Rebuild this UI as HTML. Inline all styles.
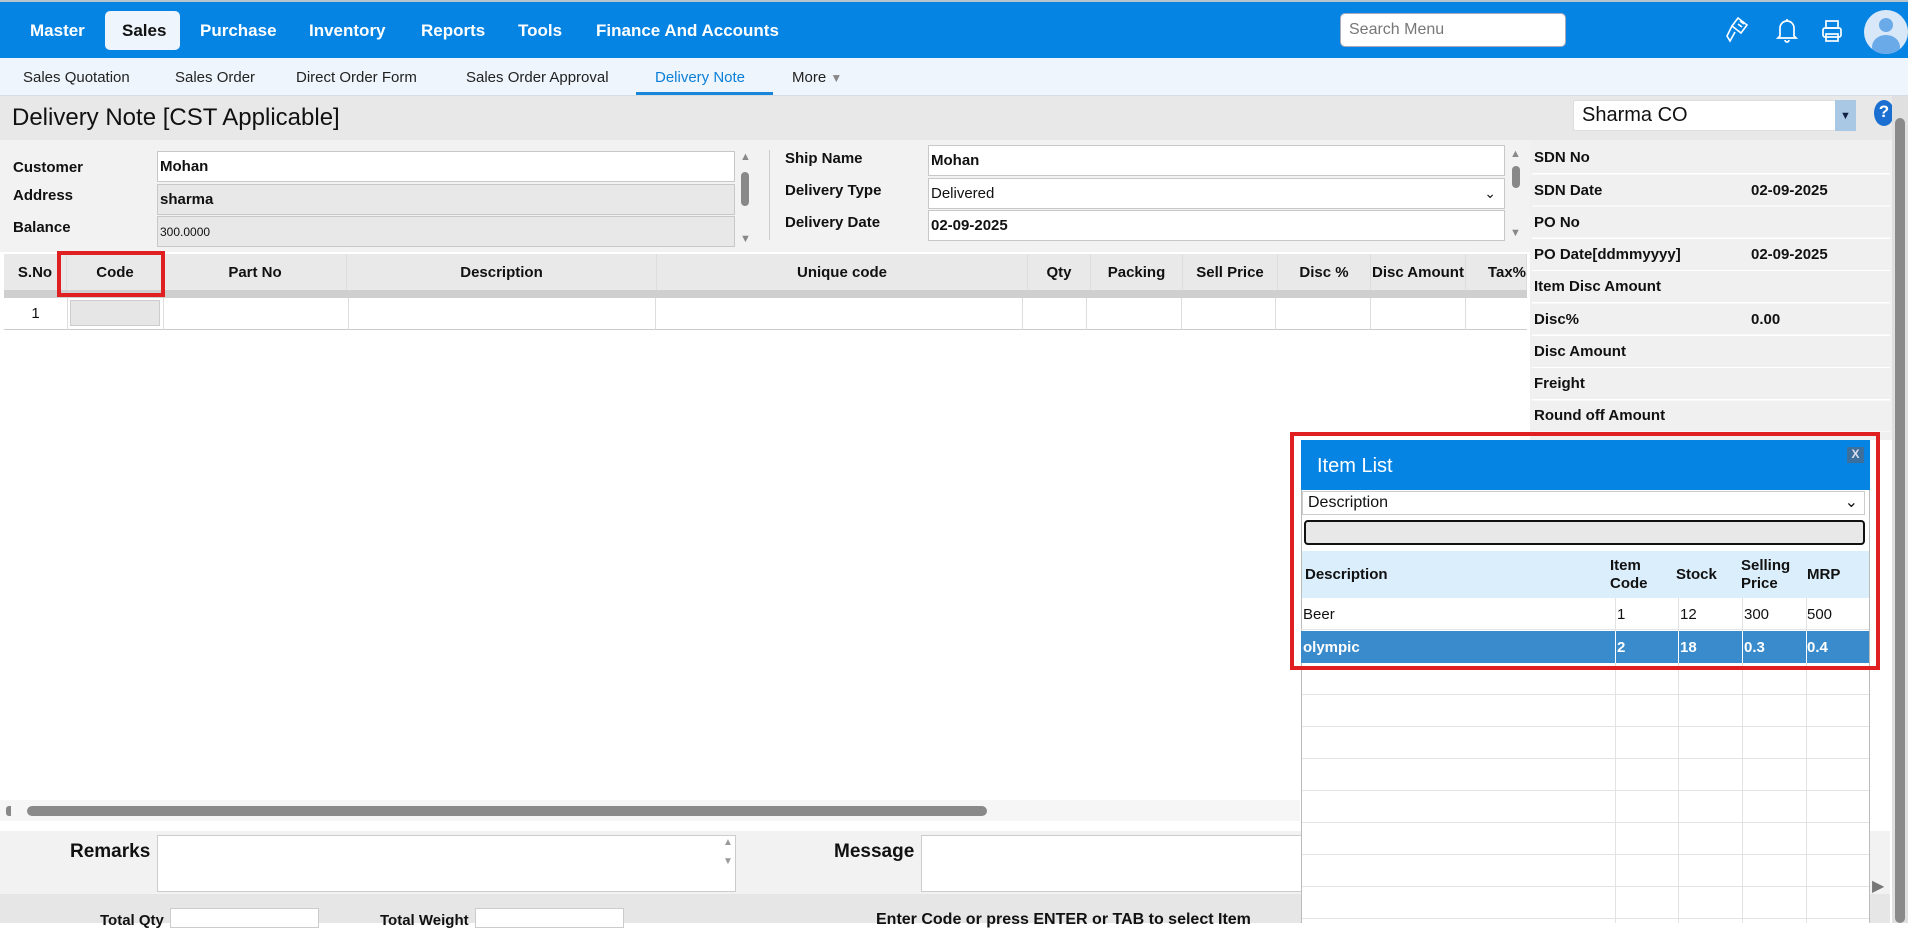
<!DOCTYPE html>
<html><head><meta charset="utf-8"><style>
*{box-sizing:border-box;margin:0;padding:0}
body{width:1908px;height:923px;overflow:hidden;position:relative;font-family:"Liberation Sans",sans-serif;background:#fff;color:#111}
.a{position:absolute}
.nav{left:0;top:0;width:1908px;height:58px;background:#0684e4;border-top:2px solid #b8c4cc}
.ni{position:absolute;top:19px;color:#fff;font-weight:bold;font-size:17px}
.sub{left:0;top:58px;width:1908px;height:38px;background:#eef5fc;border-bottom:1px solid #d6dde4}
.si{position:absolute;top:11px;font-size:15px;color:#222}
.lbl{position:absolute;font-size:15px;font-weight:bold;color:#111}
.inp{position:absolute;border:1px solid #c8c8c8;background:#fff;font-size:15px;padding-left:2px;display:flex;align-items:center}
.th{position:absolute;top:254px;height:37px;border-right:1px solid #ddd;font-size:15px;font-weight:bold;display:flex;align-items:center;justify-content:center;background:#e9e9e9}
.td{position:absolute;top:298px;height:32px;border-right:1px solid #ddd;border-bottom:1px solid #ccc;background:#fff}
.rp{position:absolute;left:1532px;width:358px;height:31px;font-size:15px;font-weight:bold}
.rp span{position:absolute;left:2px;top:7px}
.rp b{position:absolute;left:219px;top:7px}
.rp i{position:absolute;left:217px;top:0;width:141px;height:31px;background:#f0f0f0}
.mrow{position:absolute;left:1301px;width:568px;height:32px;border-bottom:1px solid #e4e4e4;font-size:15px}
.vl{position:absolute;top:598px;height:325px;width:1px;background:#e2e2e2}
</style></head><body>
<div class="a nav">
<div class="ni" style="left:30px">Master</div>
<div class="a" style="left:105px;top:9px;width:75px;height:39px;background:#eef5fc;border-radius:5px"></div>
<div class="ni" style="left:122px;color:#111">Sales</div>
<div class="ni" style="left:200px">Purchase</div>
<div class="ni" style="left:309px">Inventory</div>
<div class="ni" style="left:421px">Reports</div>
<div class="ni" style="left:518px">Tools</div>
<div class="ni" style="left:596px">Finance And Accounts</div>
<div class="a" style="left:1340px;top:11px;width:226px;height:34px;background:#fff;border-radius:5px;border:1px solid #aab;font-size:16px;color:#777;padding:7px 8px">Search Menu</div>
<svg class="a" style="left:1724px;top:14px" width="26" height="28" viewBox="0 0 26 28" fill="none" stroke="#fff" stroke-width="1.6"><path d="M14 2l9 7-6 8-9-7z"/><path d="M8 10l-5 10 3 5 5-9"/><path d="M16 5l4 3M14 8l4 3"/></svg>
<svg class="a" style="left:1776px;top:15px" width="22" height="26" viewBox="0 0 22 26" fill="none" stroke="#fff" stroke-width="1.7"><path d="M4 19V11a7 7 0 0114 0v8l2 2H2z"/><path d="M9 23a2 2 0 004 0M11 2v2"/></svg>
<svg class="a" style="left:1821px;top:17px" width="22" height="24" viewBox="0 0 22 24" fill="none" stroke="#fff" stroke-width="1.7"><rect x="5" y="2" width="12" height="7"/><rect x="2" y="9" width="18" height="9" rx="2"/><rect x="5" y="15" width="12" height="7"/></svg>
<div class="a" style="left:1864px;top:8px;width:44px;height:44px;border-radius:50%;background:#d8e8f8;overflow:hidden"><div class="a" style="left:15px;top:8px;width:14px;height:14px;border-radius:50%;background:#6aaae8"></div><div class="a" style="left:8px;top:25px;width:28px;height:24px;border-radius:50%;background:#6aaae8"></div></div>
</div>
<div class="a sub">
<div class="si" style="left:23px">Sales Quotation</div>
<div class="si" style="left:175px">Sales Order</div>
<div class="si" style="left:296px">Direct Order Form</div>
<div class="si" style="left:466px">Sales Order Approval</div>
<div class="si" style="left:655px;color:#0b7fd8">Delivery Note</div>
<div class="a" style="left:636px;top:34px;width:137px;height:3px;background:#1a86d8"></div>
<div class="si" style="left:792px">More <span style="color:#888;font-size:12px">▼</span></div>
</div>
<div class="a" style="left:0;top:96px;width:1908px;height:44px;background:#e8e8e8"></div>
<div class="a" style="left:12px;top:104px;font-size:24px">Delivery Note [CST Applicable]</div>
<div class="a" style="left:1573px;top:100px;width:283px;height:31px;background:#fff;border:1px solid #ddd;font-size:20px;padding:3px 8px">Sharma CO</div>
<div class="a" style="left:1835px;top:100px;width:21px;height:31px;background:#a8c8e4;color:#124;font-size:11px;text-align:center;padding-top:10px">▼</div>
<div class="a" style="left:1874px;top:100px;width:20px;height:26px;border-radius:50%;background:#1a6fd0;color:#fff;font-weight:bold;font-size:17px;text-align:center;padding-top:2px">?</div>
<div class="a" style="left:1892px;top:96px;width:16px;height:827px;background:#e0e0e0"><div class="a" style="left:3px;top:22px;width:10px;height:805px;background:#8a8a8a;border-radius:5px"></div></div>

<div class="a" style="left:0;top:140px;width:1530px;height:112px;background:#f2f2f2"></div>
<div class="lbl" style="left:13px;top:159px">Customer</div>
<div class="lbl" style="left:13px;top:187px">Address</div>
<div class="lbl" style="left:13px;top:219px">Balance</div>
<div class="inp" style="left:157px;top:151px;width:578px;height:31px;font-weight:bold">Mohan</div>
<div class="inp" style="left:157px;top:184px;width:578px;height:31px;background:#e8e8e8;font-weight:bold">sharma</div>
<div class="inp" style="left:157px;top:216px;width:578px;height:31px;background:#e8e8e8;font-size:12px">300.0000</div>
<div class="a" style="left:740px;top:151px;font-size:11px;color:#888">▲</div>
<div class="a" style="left:741px;top:172px;width:8px;height:34px;border-radius:4px;background:#888"></div>
<div class="a" style="left:740px;top:233px;font-size:11px;color:#888">▼</div>
<div class="a" style="left:769px;top:150px;width:1px;height:90px;background:#ccc"></div>
<div class="lbl" style="left:785px;top:150px">Ship Name</div>
<div class="lbl" style="left:785px;top:182px">Delivery Type</div>
<div class="lbl" style="left:785px;top:214px">Delivery Date</div>
<div class="inp" style="left:928px;top:145px;width:577px;height:31px;font-weight:bold">Mohan</div>
<div class="inp" style="left:928px;top:178px;width:577px;height:31px">Delivered<span style="position:absolute;right:8px;font-size:14px">⌄</span></div>
<div class="inp" style="left:928px;top:210px;width:577px;height:31px;font-weight:bold">02-09-2025</div>
<div class="a" style="left:1510px;top:148px;font-size:11px;color:#888">▲</div>
<div class="a" style="left:1512px;top:166px;width:8px;height:22px;border-radius:4px;background:#888"></div>
<div class="a" style="left:1510px;top:227px;font-size:11px;color:#888">▼</div>

<div class="a" style="left:1530px;top:140px;width:362px;height:300px;background:#f0f0f0"></div>
<div class="rp" style="top:142px"><i></i><span>SDN No</span></div>
<div class="rp" style="top:175px"><i></i><span>SDN Date</span><b>02-09-2025</b></div>
<div class="rp" style="top:207px"><i></i><span>PO No</span></div>
<div class="rp" style="top:239px"><i></i><span>PO Date[ddmmyyyy]</span><b>02-09-2025</b></div>
<div class="rp" style="top:271px"><i></i><span>Item Disc Amount</span></div>
<div class="rp" style="top:304px"><i></i><span>Disc%</span><b>0.00</b></div>
<div class="rp" style="top:336px"><i></i><span>Disc Amount</span></div>
<div class="rp" style="top:368px"><i></i><span>Freight</span></div>
<div class="rp" style="top:400px"><i></i><span>Round off Amount</span></div>
<div class="a" style="left:1532px;top:142px;width:358px;height:290px;background:repeating-linear-gradient(to bottom,transparent 0 31px,#fff 31px 32.3px)"></div>

<div class="th" style="left:4px;width:63px">S.No</div>
<div class="th" style="left:67px;width:97px">Code</div>
<div class="th" style="left:164px;width:183px">Part No</div>
<div class="th" style="left:347px;width:310px">Description</div>
<div class="th" style="left:657px;width:371px">Unique code</div>
<div class="th" style="left:1028px;width:63px">Qty</div>
<div class="th" style="left:1091px;width:92px">Packing</div>
<div class="th" style="left:1183px;width:95px">Sell Price</div>
<div class="th" style="left:1278px;width:93px">Disc %</div>
<div class="th" style="left:1371px;width:95px">Disc Amount</div>
<div class="th" style="left:1466px;width:61px;justify-content:flex-end;overflow:hidden">Tax%</div>
<div class="a" style="left:4px;top:290px;width:1523px;height:8px;background:#cfcfcf"></div>
<div class="td" style="left:4px;width:64px;font-size:15px;text-align:center;padding-top:7px">1</div>
<div class="td" style="left:68px;width:96px"><div class="a" style="left:2px;top:2px;width:90px;height:26px;background:#e6e6e6;border:1px solid #ccc"></div></div>
<div class="td" style="left:164px;width:185px"></div>
<div class="td" style="left:349px;width:307px"></div>
<div class="td" style="left:656px;width:367px"></div>
<div class="td" style="left:1023px;width:64px"></div>
<div class="td" style="left:1087px;width:95px"></div>
<div class="td" style="left:1182px;width:94px"></div>
<div class="td" style="left:1276px;width:95px"></div>
<div class="td" style="left:1371px;width:95px"></div>
<div class="td" style="left:1466px;width:61px;border-right:none"></div>
<div class="a" style="left:57px;top:251px;width:108px;height:46px;border:4px solid #e02020"></div>

<div class="a" style="left:0;top:800px;width:1300px;height:21px;background:#f6f6f6"></div>
<div class="a" style="left:6px;top:806px;width:5px;height:10px;background:#888;border-radius:3px 0 0 3px"></div>
<div class="a" style="left:27px;top:806px;width:960px;height:10px;background:#8a8a8a;border-radius:5px"></div>

<div class="a" style="left:0;top:831px;width:1890px;height:63px;background:#f2f2f2"></div>
<div class="a" style="left:70px;top:841px;font-size:19px;font-weight:bold;width:78px;text-align:right">Remarks</div>
<div class="a" style="left:157px;top:835px;width:579px;height:57px;background:#fff;border:1px solid #ccc"></div>
<div class="a" style="left:723px;top:837px;font-size:10px;color:#999">▲</div>
<div class="a" style="left:723px;top:856px;font-size:10px;color:#999">▼</div>
<div class="a" style="left:834px;top:841px;font-size:19px;font-weight:bold">Message</div>
<div class="a" style="left:921px;top:835px;width:400px;height:57px;background:#fff;border:1px solid #ccc"></div>
<div class="a" style="left:0;top:894px;width:1890px;height:29px;background:#e6e6e6"></div>
<div class="a" style="left:100px;top:912px;font-size:15px;font-weight:bold">Total Qty</div>
<div class="a" style="left:170px;top:908px;width:149px;height:20px;background:#fff;border:1px solid #ccc"></div>
<div class="a" style="left:380px;top:912px;font-size:15px;font-weight:bold">Total Weight</div>
<div class="a" style="left:475px;top:908px;width:149px;height:20px;background:#fff;border:1px solid #ccc"></div>
<div class="a" style="left:876px;top:911px;font-size:16px;font-weight:bold">Enter Code or press ENTER or TAB to select Item</div>
<div class="a" style="left:1872px;top:876px;font-size:16px;color:#777">▶</div>

<div class="a" style="left:1301px;top:440px;width:569px;height:483px;background:#fff;border-left:1px solid #bbb;border-right:1px solid #bbb"></div>
<div class="a" style="left:1301px;top:440px;width:569px;height:50px;background:#0684e4"></div>
<div class="a" style="left:1317px;top:455px;color:#fff;font-size:20px">Item List</div>
<div class="a" style="left:1847px;top:447px;width:17px;height:16px;background:#3d6f9c;color:#dde;font-size:12px;font-weight:bold;text-align:center">X</div>
<div class="a" style="left:1302px;top:491px;width:563px;height:24px;background:#fff;border:1px solid #ccc;font-size:16px;padding:2px 5px">Description<span style="position:absolute;right:6px;top:0">⌄</span></div>
<div class="a" style="left:1304px;top:520px;width:561px;height:25px;background:#e8e8e8;border:2px solid #111;border-radius:4px"></div>
<div class="a" style="left:1302px;top:551px;width:567px;height:47px;background:#daeefc"></div>
<div class="a" style="left:1305px;top:566px;font-size:15px;font-weight:bold">Description</div>
<div class="a" style="left:1610px;top:557px;font-size:15px;font-weight:bold;line-height:18px">Item<br>Code</div>
<div class="a" style="left:1676px;top:566px;font-size:15px;font-weight:bold">Stock</div>
<div class="a" style="left:1741px;top:557px;font-size:15px;font-weight:bold;line-height:18px">Selling<br>Price</div>
<div class="a" style="left:1807px;top:566px;font-size:15px;font-weight:bold">MRP</div>
<div class="vl" style="left:1615px"></div><div class="vl" style="left:1678px"></div><div class="vl" style="left:1742px"></div><div class="vl" style="left:1806px"></div>
<div class="mrow" style="top:598px"><span class="a" style="left:2px;top:8px">Beer</span><span class="a" style="left:316px;top:8px">1</span><span class="a" style="left:379px;top:8px">12</span><span class="a" style="left:443px;top:8px">300</span><span class="a" style="left:506px;top:8px">500</span></div>
<div class="mrow" style="top:631px;background:#3a8bcb;color:#fff;font-weight:bold;border-bottom:none"><span class="a" style="left:2px;top:8px">olympic</span><span class="a" style="left:316px;top:8px">2</span><span class="a" style="left:379px;top:8px">18</span><span class="a" style="left:443px;top:8px">0.3</span><span class="a" style="left:506px;top:8px">0.4</span><i class="a" style="left:314px;top:0;width:1px;height:32px;background:#fff"></i><i class="a" style="left:377px;top:0;width:1px;height:32px;background:#fff"></i><i class="a" style="left:441px;top:0;width:1px;height:32px;background:#fff"></i><i class="a" style="left:505px;top:0;width:1px;height:32px;background:#fff"></i></div>
<div class="a" style="left:1302px;top:663px;width:567px;height:260px;background:repeating-linear-gradient(to bottom,transparent 0 31px,#e4e4e4 31px 32px)"></div>
<div class="a" style="left:1290px;top:432px;width:590px;height:238px;border:4px solid #e02020"></div>
</body></html>
